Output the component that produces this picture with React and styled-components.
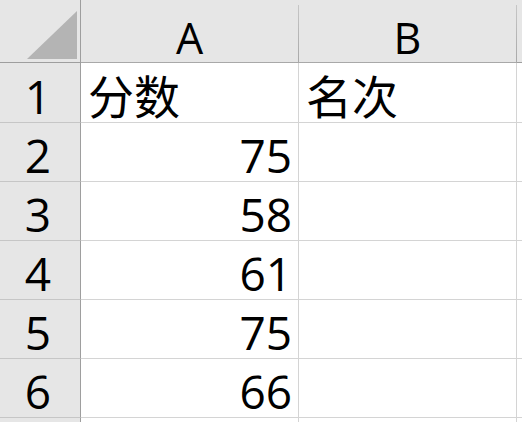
import React from 'react';
import styled, { createGlobalStyle } from 'styled-components';

const GlobalStyle = createGlobalStyle`
  html, body {
    margin: 0;
    padding: 0;
    background: #ffffff;
  }
  body {
    font-family: "Open Sans", "Noto Sans CJK SC", sans-serif;
    overflow: hidden;
  }
`;

const Sheet = styled.div`
  display: grid;
  grid-template-columns: 81px 218px 218px 1fr;
  grid-template-rows: 63px 60px repeat(5, 59px) 1fr;
  width: 522px;
  height: 422px;
  overflow: hidden;
  color: #000;
`;

const Corner = styled.div`
  background: #e6e6e6;
  border-right: 1px solid #9e9e9e;
  border-bottom: 1px solid #9e9e9e;
  box-sizing: border-box;
  display: flex;
  align-items: flex-end;
  justify-content: flex-end;
  padding: 0 3px 3px 0;
`;

const ColHead = styled.div`
  background: #e6e6e6;
  box-sizing: border-box;
  border-bottom: 1px solid #9e9e9e;
  border-right: 1px solid;
  border-image: linear-gradient(to bottom, #e6e6e6 6px, #c6c6c6 6px, #a8a8a8) 1;
  border-bottom-color: #9e9e9e;
  display: flex;
  align-items: center;
  justify-content: center;
  padding-top: 13px;
  font-size: 43px;
  line-height: 1;
`;

const HeadBar = styled.div`
  background: #e6e6e6;
  border-bottom: 1px solid #9e9e9e;
  box-sizing: border-box;
`;

const RowHead = styled.div`
  background: #e6e6e6;
  box-sizing: border-box;
  border-right: 1px solid #9e9e9e;
  border-bottom: 1px solid #c6c6c6;
  display: flex;
  align-items: center;
  justify-content: center;
  padding: 6px 4px 0 0;
  font-size: 46px;
  line-height: 1;
`;

const Cell = styled.div`
  box-sizing: border-box;
  border-right: 1px solid #d4d4d4;
  border-bottom: 1px solid #d4d4d4;
  display: flex;
  align-items: center;
  justify-content: ${(p) => (p.$num ? 'flex-end' : 'flex-start')};
  padding: 6px ${(p) => (p.$num ? '6px' : '0')} 0 ${(p) => (p.$num ? '0' : '7px')};
  font-size: 46px;
  line-height: 1;
  white-space: nowrap;
`;

const Filler = styled.div`
  border-bottom: 1px solid #d4d4d4;
  box-sizing: border-box;
`;

// last row is only a sliver at the bottom edge, its label is out of view
const rows = [
  ['分数', '名次'],
  [75, ''],
  [58, ''],
  [61, ''],
  [75, ''],
  [66, ''],
  ['', ''],
];

export default function App() {
  return (
    <>
      <GlobalStyle />
      <Sheet>
        <Corner>
          <svg width="50" height="48" viewBox="0 0 50 48">
            <polygon points="0,48 50,0 50,48" fill="#b4b4b4" />
          </svg>
        </Corner>
        <ColHead>A</ColHead>
        <ColHead>B</ColHead>
        <HeadBar />
        {rows.map((r, i) => (
          <React.Fragment key={i}>
            <RowHead>{i < 6 ? i + 1 : ''}</RowHead>
            {r.map((v, j) => (
              <Cell key={j} $num={typeof v === 'number'}>
                {v}
              </Cell>
            ))}
            <Filler />
          </React.Fragment>
        ))}
      </Sheet>
    </>
  );
}
